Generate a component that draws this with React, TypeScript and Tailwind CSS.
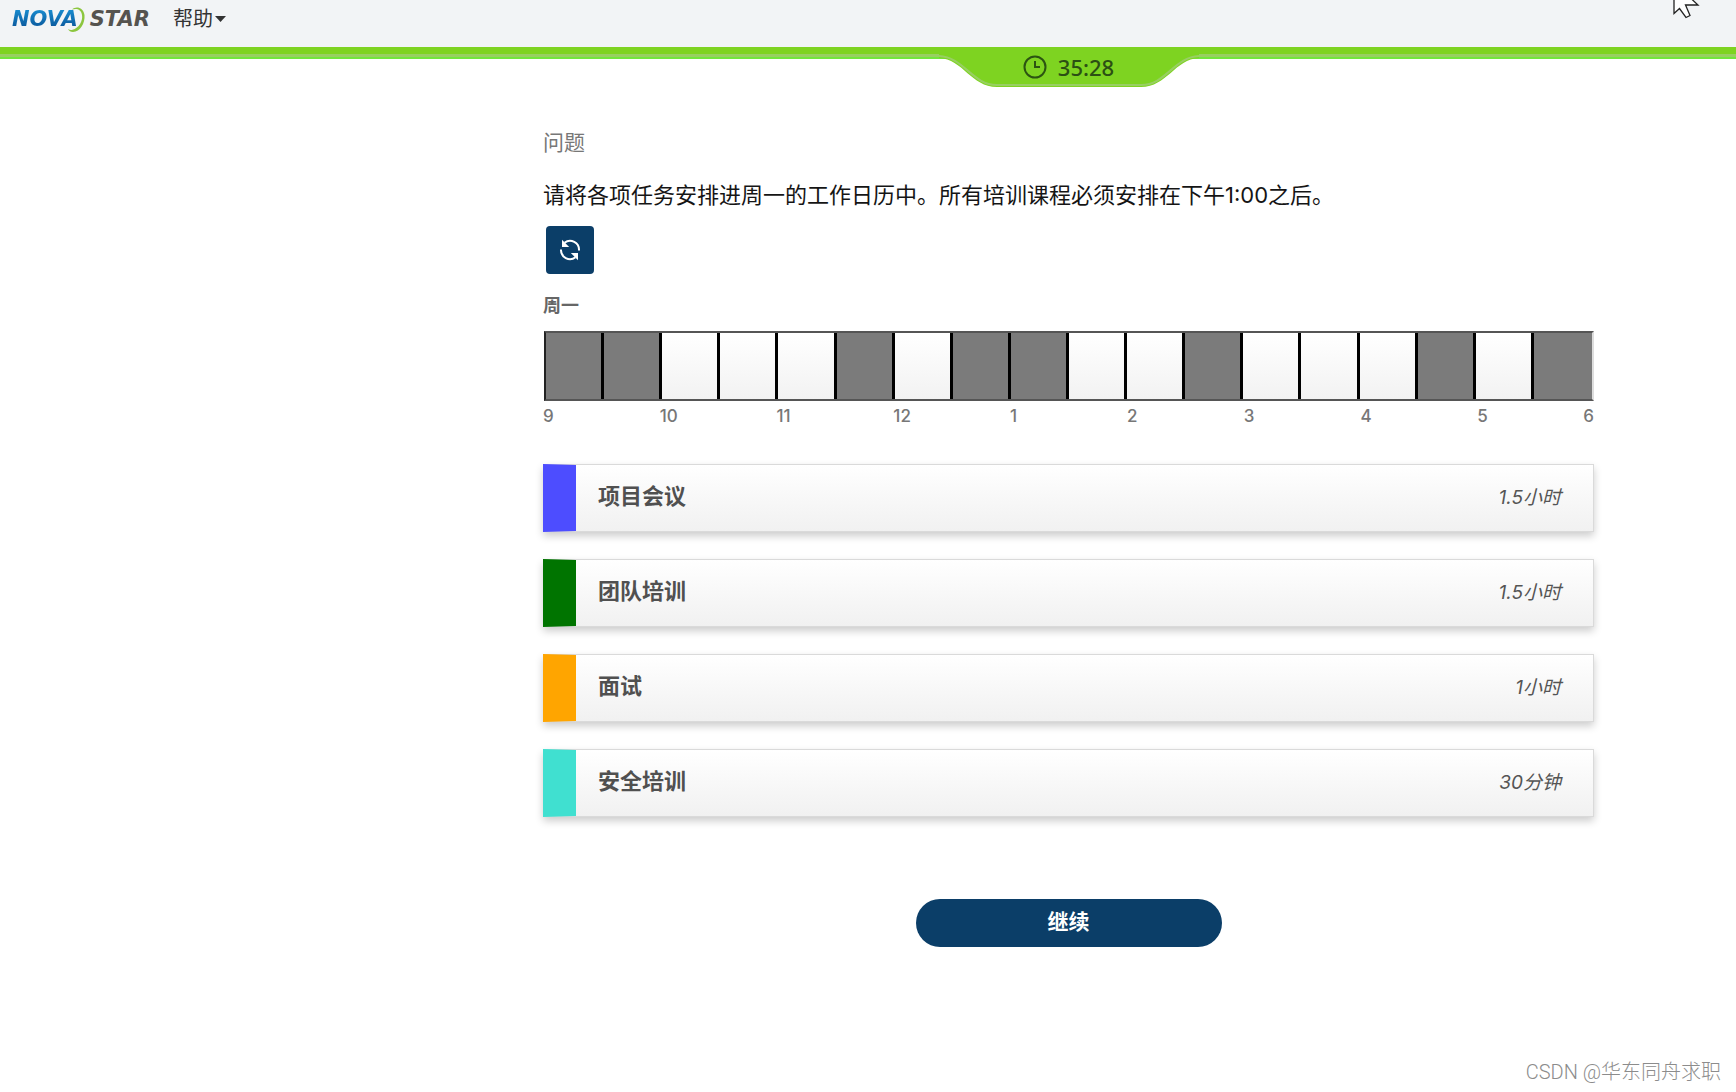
import React from "react";

const slots = [1, 1, 0, 0, 0, 1, 0, 1, 1, 0, 0, 1, 0, 0, 0, 1, 0, 1];
const hours = ["9", "10", "11", "12", "1", "2", "3", "4"];

const tasks = [
  { name: "项目会议", duration: "1.5小时", edge: "border-l-[#4d4dff]" },
  { name: "团队培训", duration: "1.5小时", edge: "border-l-[#007400]" },
  { name: "面试", duration: "1小时", edge: "border-l-[#ffa500]" },
  { name: "安全培训", duration: "30分钟", edge: "border-l-[#40e0d0]" },
];

function Logo() {
  return (
    <a href="#" aria-label="NovaStar" className="relative flex h-6 w-[138px] items-center justify-between font-['DejaVu_Sans'] text-[21px] leading-6 font-bold italic">
      <span className="bg-linear-to-b from-[#1b93d6] to-[#0a4f93] bg-clip-text pr-1 text-transparent">NOVA</span>
      <span className="text-[#55534f]">STAR</span>
      <svg className="absolute -top-px left-[51px]" width="24" height="28" viewBox="0 0 24 28" fill="none">
        <path d="M9 3.500C13 0 20 1 21.500 9c.8 8-4.500 17-11.500 17-2.500 0-4-1-5-3 1.500 1 3 1.200 4.500.8C16 22 20 15 19 9 18.200 3.500 14 2 9 3.500Z" fill="#8cc63f" />
      </svg>
    </a>
  );
}

function Timer() {
  return (
    <div className="relative -mt-3 flex h-10 w-[260px] items-center justify-center gap-[11px]">
      <svg className="absolute inset-0" width="260" height="40" viewBox="0 0 260 40" fill="none">
        <path d="M0 11C24 12 32 40 58 40H202C228 40 236 12 260 11V0H0Z" fill="#7ed321" />
        <path d="M0 9C25 10 33 38 58 38H202C227 38 235 10 260 9" stroke="#98cf62" strokeWidth="2" />
      </svg>
      <svg className="relative" width="24" height="24" viewBox="0 0 24 24" fill="none" stroke="#2c5412" strokeWidth="2">
        <circle cx="12" cy="12" r="10.500" />
        <path d="M12 6v6h5" />
      </svg>
      <time className="relative font-['Noto_Sans'] text-[22px] leading-7 font-medium text-[#2c4f14]">35:28</time>
    </div>
  );
}

export default function App() {
  return (
    <div className="flex min-h-screen flex-col bg-white font-[Inter,'Noto_Sans_CJK_SC',sans-serif]">
      <header className="relative flex h-[47px] items-start bg-[#f2f4f6] pt-[7px] pl-3">
        <Logo />
        <button type="button" className="ml-[23px] flex items-center gap-0.5 text-[20px] leading-6 text-[#333]">
          帮助
          <svg width="11" height="6" viewBox="0 0 11 6"><path d="M0 0h11L5.500 6Z" fill="#333" /></svg>
        </button>
        <svg className="absolute top-0 right-[35px]" width="28" height="19" viewBox="0 0 28 19">
          <path d="M1-9V13.500L6.500 8.500 13 17.500 17 15.500 12.500 5H25L10-9Z" fill="white" stroke="#222" strokeWidth="1.300" />
        </svg>
      </header>
      <div className="h-3 border-b-2 border-[#72e63c] bg-linear-to-b from-[#7ed321] from-70% to-[#98cf62] to-70%" />

      <main className="grid grid-cols-[543px_1fr_142px]">
        <div className="col-start-2 flex flex-col">
          <div className="flex justify-center">
            <Timer />
          </div>
          <h1 className="mt-[42px] text-[21px] leading-7 text-[#777]">问题</h1>
          <p className="mt-[22px] text-[22px] leading-8 text-[#151515]">
            请将各项任务安排进周一的工作日历中。所有培训课程必须安排在下午1:00之后。
          </p>
          <button type="button" aria-label="重置" className="mt-[15px] ml-[3px] flex size-12 items-center justify-center rounded bg-[#0b3e68]">
            <svg width="22" height="22" viewBox="0 0 22 22" fill="none" stroke="white" strokeWidth="2">
              <path d="M5.500 3.800A9 9 0 0 1 20 11.500" />
              <path d="M16.500 18.200A9 9 0 0 1 2 10.500" />
              <path d="M3 .8V8H10.200Z" fill="white" stroke="none" />
              <path d="M19 21.200V14H11.800Z" fill="white" stroke="none" />
            </svg>
          </button>
          <h2 className="mt-5 text-[18px] leading-6 font-bold text-[#666]">周一</h2>
          <div className="mt-[13px] ml-px grid h-[70px] grid-cols-18 border-2 border-y-[#555] border-r-[#ddd] border-l-[#222]">
            {slots.map((busy, i) => (
              <div
                key={i}
                className={
                  (busy ? "bg-[#7b7b7b]" : "bg-linear-to-b from-white to-[#f2f2f2]") +
                  (i < slots.length - 1 ? " border-r-[3px] border-black" : "")
                }
              />
            ))}
          </div>
          <div className="mt-[3px] grid grid-cols-9 text-[17px] leading-6 font-medium text-[#777]">
            {hours.map((h) => (
              <span key={h}>{h}</span>
            ))}
            <span className="flex justify-between"><span>5</span><span>6</span></span>
          </div>

          <ul className="mt-9 flex flex-col gap-[27px]">
            {tasks.map((t) => (
              <li
                key={t.name}
                className={`flex h-[68px] items-center justify-between border border-l-[33px] border-[#dadada] bg-linear-to-b from-white to-[#f1f1f1] pr-8 pl-[22px] shadow-[0_4px_8px_rgba(0,0,0,0.2)] ${t.edge}`}
              >
                <span className="pb-1 text-[22px] leading-8 font-bold text-[#505050]">{t.name}</span>
                <span className="text-[19px] leading-8 text-[#555] italic">{t.duration}</span>
              </li>
            ))}
          </ul>

          <button type="button" className="mt-[82px] h-12 w-[306px] self-center rounded-full bg-[#0b3e68] pb-0.5 text-[21px] leading-7 font-bold text-white">
            继续
          </button>
        </div>
      </main>

      <footer className="mt-auto pr-[15px] pb-1 text-right font-[Roboto,'Noto_Sans_CJK_SC',sans-serif] text-[20px] leading-8 font-light text-[#8c8c8c]">
        CSDN @华东同舟求职
      </footer>
    </div>
  );
}
